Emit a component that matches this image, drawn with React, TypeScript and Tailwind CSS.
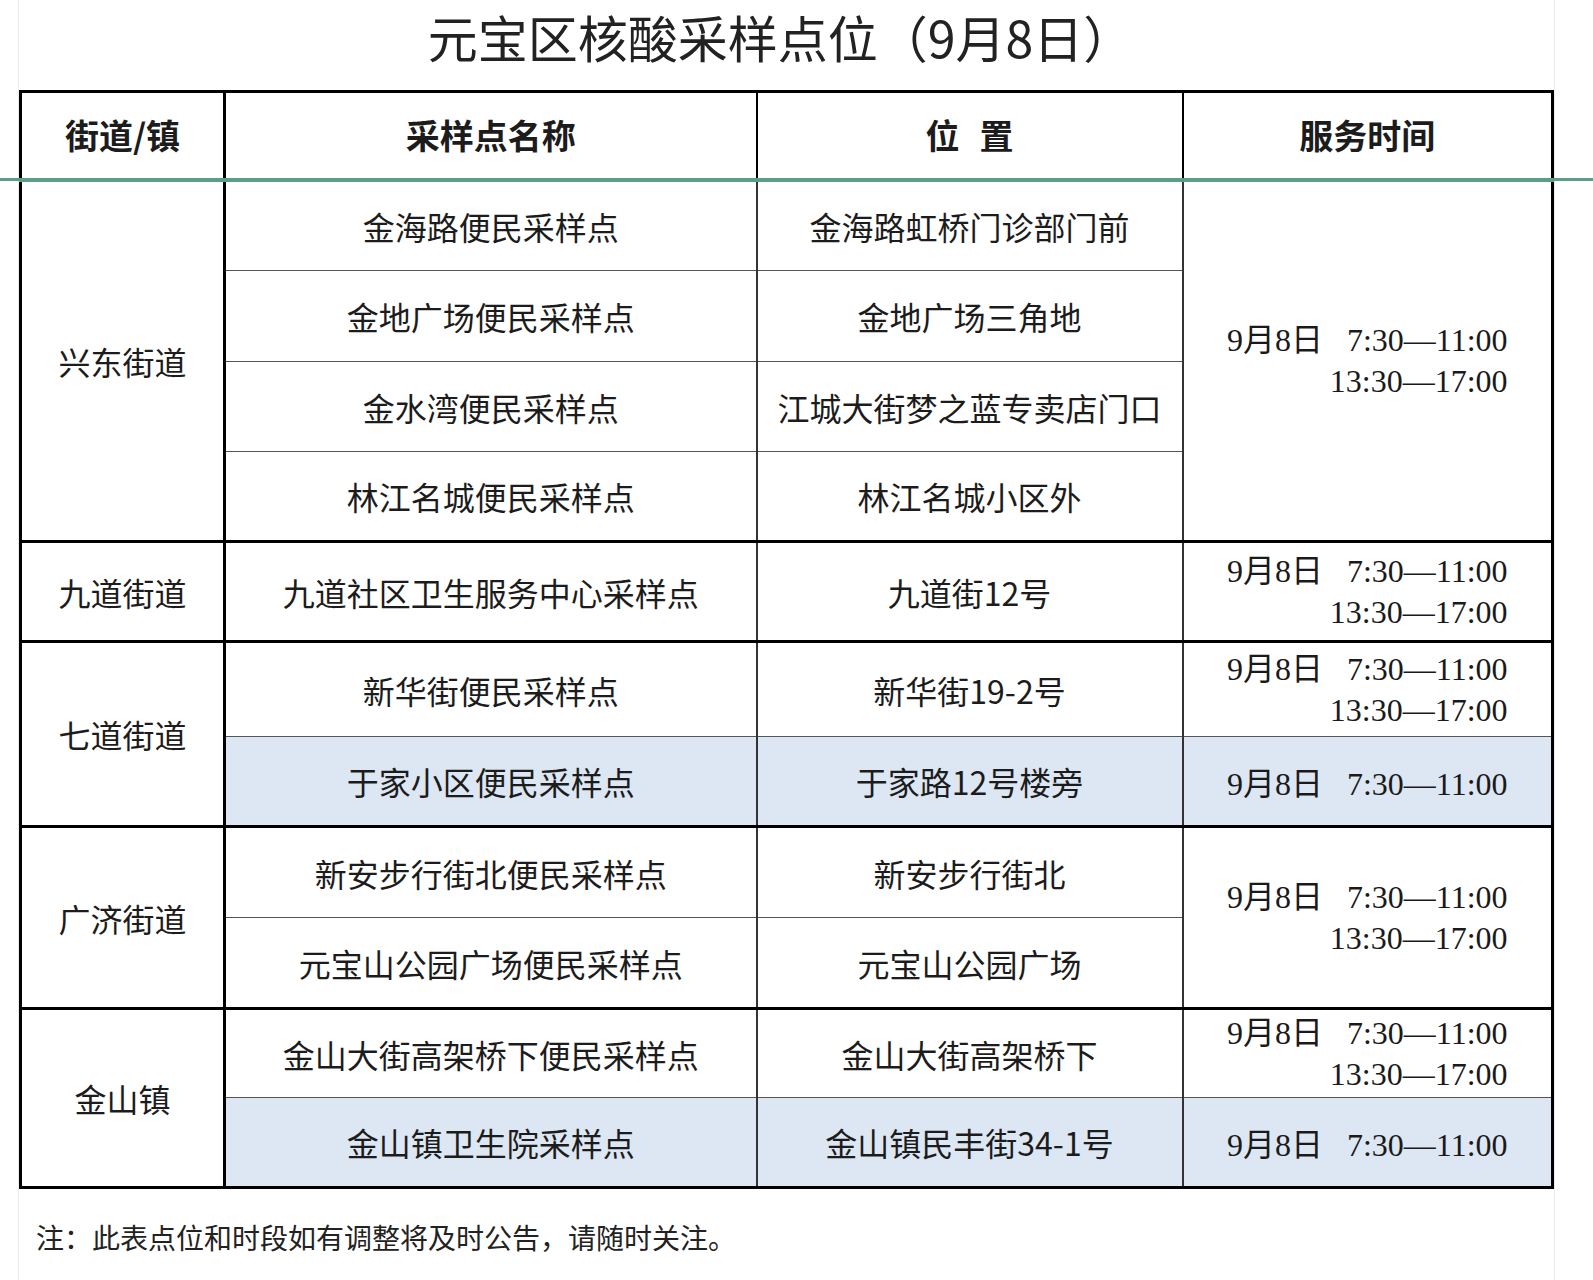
// Nucleic acid sampling sites table (元宝区, 9月8日)

type Row = {
  street?: [string, number];
  name: string;
  loc: string;
  time?: [boolean, number];
  hl?: boolean;
  h: number;
  end?: boolean;
};

const rows: Row[] = [
  { street: ["兴东街道", 4], name: "金海路便民采样点", loc: "金海路虹桥门诊部门前", time: [true, 4], h: 90 },
  { name: "金地广场便民采样点", loc: "金地广场三角地", h: 91 },
  { name: "金水湾便民采样点", loc: "江城大街梦之蓝专卖店门口", h: 90 },
  { name: "林江名城便民采样点", loc: "林江名城小区外", h: 90, end: true },
  { street: ["九道街道", 1], name: "九道社区卫生服务中心采样点", loc: "九道街12号", time: [true, 1], h: 100, end: true },
  { street: ["七道街道", 2], name: "新华街便民采样点", loc: "新华街19-2号", time: [true, 1], h: 95 },
  { name: "于家小区便民采样点", loc: "于家路12号楼旁", time: [false, 1], hl: true, h: 90, end: true },
  { street: ["广济街道", 2], name: "新安步行街北便民采样点", loc: "新安步行街北", time: [true, 2], h: 91 },
  { name: "元宝山公园广场便民采样点", loc: "元宝山公园广场", h: 91, end: true },
  { street: ["金山镇", 2], name: "金山大街高架桥下便民采样点", loc: "金山大街高架桥下", time: [true, 1], h: 89 },
  { name: "金山镇卫生院采样点", loc: "金山镇民丰街34-1号", time: [false, 1], hl: true, h: 90, end: true },
];

function TimeText({ full }: { full: boolean }) {
  return (
    <div className="inline-block text-right font-['Liberation_Serif','Noto_Sans_CJK_SC',serif] text-[32px] leading-[41px] text-[#1a1a1a]">
      <div>
        9月8日<span className="ml-[24px]">7:30—11:00</span>
      </div>
      {full && <div>13:30—17:00</div>}
    </div>
  );
}

function App() {
  return (
    <div className="relative w-[1593px] h-[1280px] bg-white overflow-hidden font-['Noto_Sans_CJK_SC','Noto_Sans',sans-serif] text-[#1c1c1c]">
      <div className="ml-[18px] w-[1537px] h-full border-x border-[#ececec]">
        <div className="h-[90px] flex items-center justify-center pr-[12px] pb-[18px]">
          <h1 className="text-[50px] leading-none font-normal text-[#222]">元宝区核酸采样点位（9月8日）</h1>
        </div>

        <table className="w-full table-fixed border-collapse border-[3px] border-black">
          <colgroup>
            <col className="w-[204px]" />
            <col className="w-[532px]" />
            <col className="w-[426px]" />
            <col />
          </colgroup>
          <thead>
            <tr className="h-[89px] text-[34px] font-bold">
              <th className="border-r-[3px] border-r-black border-b-[3px] border-b-[#5b9e86] pb-[3px]">街道/镇</th>
              <th className="border-r-[2.5px] border-r-black border-b-[3px] border-b-[#5b9e86] pb-[3px]">采样点名称</th>
              <th className="border-r-[2.5px] border-r-black border-b-[3px] border-b-[#5b9e86] pb-[3px]">
                位<span className="ml-[20px]">置</span>
              </th>
              <th className="border-b-[3px] border-b-[#5b9e86] pb-[3px]">服务时间</th>
            </tr>
          </thead>
          <tbody className="text-[32px]">
            {rows.map((r) => {
              const bottom = r.end ? "border-b-[3px] border-b-black" : "border-b-[1.5px] border-b-[#555]";
              const bg = r.hl ? "bg-[#dde7f3]" : "bg-white";
              return (
                <tr key={r.name} style={{ height: r.h }}>
                  {r.street && (
                    <td
                      rowSpan={r.street[1]}
                      className="text-center border-r-[3px] border-r-black border-b-[3px] border-b-black bg-white"
                    >
                      {r.street[0]}
                    </td>
                  )}
                  <td className={`text-center border-r-2 border-r-[#333] ${bottom} ${bg}`}>{r.name}</td>
                  <td className={`text-center border-r-2 border-r-[#333] ${bottom} ${bg}`}>{r.loc}</td>
                  {r.time && (
                    <td
                      rowSpan={r.time[1]}
                      className={`text-center ${
                        r.time[1] > 1 || r.end ? "border-b-[3px] border-b-black" : "border-b-[1.5px] border-b-[#555]"
                      } ${bg}`}
                    >
                      <TimeText full={r.time[0]} />
                    </td>
                  )}
                </tr>
              );
            })}
          </tbody>
        </table>

        <p className="mt-[30px] pl-[17px] text-[28px] leading-[36px] text-[#222]">
          注：此表点位和时段如有调整将及时公告，请随时关注。
        </p>
      </div>

      {/* frozen pane line from the spreadsheet view */}
      <div className="absolute left-0 right-0 top-[178px] h-[3px] bg-[#5b9e86]" />
    </div>
  );
}

export default App;
